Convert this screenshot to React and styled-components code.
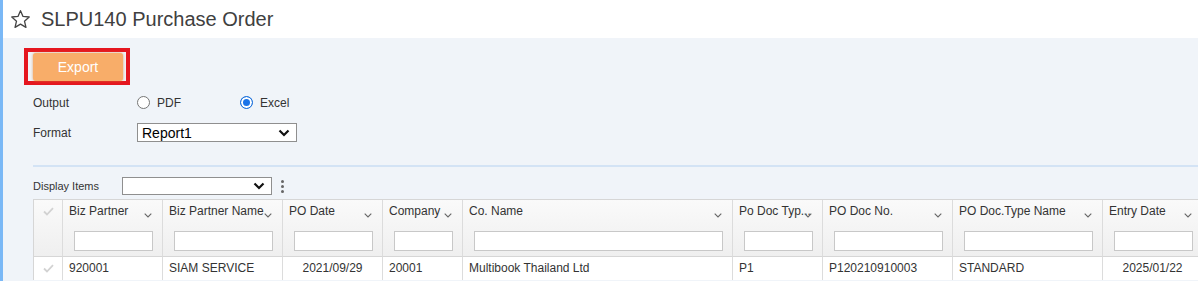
import React from "react";
import styled, { createGlobalStyle } from "styled-components";

const GlobalStyle = createGlobalStyle`
  html, body {
    margin: 0;
    padding: 0;
    background: #fff;
    overflow: hidden;
  }
  body {
    font-family: "Liberation Sans", Arial, sans-serif;
    color: #333;
  }
`;

const Page = styled.div`
  display: flex;
  width: 1198px;
  height: 281px;
  overflow: hidden;
`;

const Stripe = styled.div`
  width: 3px;
  flex-shrink: 0;
  background: #7ab8f6;
`;

const Main = styled.div`
  flex: 1;
  min-width: 0;
  display: flex;
  flex-direction: column;
`;

const TitleBar = styled.div`
  height: 38px;
  flex-shrink: 0;
  display: flex;
  align-items: center;
  gap: 10px;
  padding-left: 7px;
  background: #fff;
`;

const Title = styled.h1`
  margin: 0;
  font-size: 20px;
  font-weight: 400;
  color: #404040;
  line-height: 24px;
`;

const Content = styled.div`
  flex: 1;
  background: #f0f4f9;
  padding: 10px 0 0 30px;
  overflow: hidden;
`;

const Highlight = styled.div`
  display: inline-flex;
  margin-left: -9px;
  border: 4px solid #e5161f;
  padding: 1px 3px 0 5px;
`;

const ExportButton = styled.button`
  width: 90px;
  height: 28px;
  border: none;
  border-radius: 3px;
  background: #f8ad69;
  color: #fff;
  font-family: inherit;
  font-size: 14px;
  box-shadow: 0 0 3px rgba(214, 130, 60, 0.7);
  cursor: pointer;
`;

const FormRow = styled.div`
  display: flex;
  align-items: center;
  height: ${({ $h }) => $h}px;
  margin-top: ${({ $mt }) => $mt}px;
`;

const Label = styled.span`
  width: ${({ $w }) => $w}px;
  flex-shrink: 0;
  font-size: ${({ $size }) => $size || 12}px;
  color: #333;
`;

const RadioOption = styled.label`
  width: 103px;
  display: flex;
  align-items: center;
  gap: 7px;
  font-size: 12px;
  color: #333;
`;

const RadioDot = styled.span`
  width: 13px;
  height: 13px;
  box-sizing: border-box;
  border-radius: 50%;
  border: 1px solid ${({ $checked }) => ($checked ? "#1a6fd9" : "#767676")};
  background: ${({ $checked }) => ($checked ? "#1a73e8" : "#fff")};
  box-shadow: ${({ $checked }) => ($checked ? "inset 0 0 0 2px #fff" : "none")};
`;

const Select = styled.div`
  width: ${({ $w }) => $w}px;
  height: ${({ $h }) => $h}px;
  box-sizing: border-box;
  border: 1px solid #8f8f8f;
  background: #fff;
  display: flex;
  align-items: center;
  justify-content: space-between;
  padding: 0 6px 0 4px;
  font-size: 14px;
  color: #000;
`;

const Separator = styled.div`
  height: 2px;
  margin-top: 23px;
  background: #d3e3f5;
`;

const Kebab = styled.div`
  margin-left: 9px;
  display: flex;
  flex-direction: column;
  gap: 2px;

  span {
    width: 3px;
    height: 3px;
    border-radius: 50%;
    background: #666;
  }
`;

const Grid = styled.div`
  margin-top: 4px;
  border-top: 1px solid #d6d6d6;
  border-left: 1px solid #d6d6d6;
  width: 1200px;
`;

const Row = styled.div`
  display: flex;
`;

const HeadCell = styled.div`
  position: relative;
  width: ${({ $w }) => $w}px;
  height: 57px;
  flex-shrink: 0;
  box-sizing: border-box;
  padding: 4px 0 0 6px;
  border-right: 1px solid #dcdcdc;
  border-bottom: 1px solid #d6d6d6;
  background: linear-gradient(#fafafa, #efefef);
`;

const HeadLabel = styled.div`
  font-size: 12px;
  line-height: 14px;
  color: #333;
  white-space: nowrap;
  overflow: hidden;
  text-overflow: ellipsis;
  padding-right: 4px;
`;

const SortChevron = styled.svg`
  position: absolute;
  right: 10px;
  top: 13px;
`;

const FilterInput = styled.div`
  width: ${({ $w }) => $w - 21}px;
  height: 20px;
  box-sizing: border-box;
  margin: 13px 0 0 5px;
  border: 1px solid #c8c8c8;
  background: #fff;
`;

const CheckCell = styled.div`
  width: 29px;
  height: ${({ $h }) => $h}px;
  flex-shrink: 0;
  box-sizing: border-box;
  border-right: 1px solid #dcdcdc;
  border-bottom: ${({ $head }) => ($head ? "1px solid #d6d6d6" : "none")};
  background: ${({ $head }) => ($head ? "linear-gradient(#fafafa, #efefef)" : "#fff")};
  display: flex;
  justify-content: center;
  align-items: flex-start;
  padding-top: 7px;
`;

const DataCell = styled.div`
  width: ${({ $w }) => $w}px;
  height: 23px;
  flex-shrink: 0;
  box-sizing: border-box;
  padding: 0 6px;
  border-right: 1px solid #dcdcdc;
  background: #fff;
  font-size: 12px;
  line-height: 23px;
  color: #333;
  white-space: nowrap;
  overflow: hidden;
  text-align: ${({ $align }) => $align || "left"};
`;

const columns = [
  { key: "bp", label: "Biz Partner", w: 100, value: "920001" },
  { key: "bpn", label: "Biz Partner Name", w: 120, value: "SIAM SERVICE" },
  { key: "pod", label: "PO Date", w: 100, value: "2021/09/29", align: "center" },
  { key: "co", label: "Company", w: 80, value: "20001" },
  { key: "con", label: "Co. Name", w: 270, value: "Multibook Thailand Ltd" },
  { key: "pdt", label: "Po Doc Typ...", w: 90, value: "P1" },
  { key: "pdn", label: "PO Doc No.", w: 130, value: "P120210910003" },
  { key: "pdtn", label: "PO Doc.Type Name", w: 150, value: "STANDARD" },
  { key: "ed", label: "Entry Date", w: 100, value: "2025/01/22", align: "center" },
];

const StarIcon = () => (
  <svg width="21" height="21" viewBox="0 0 20 20">
    <path
      d="M10 1.6 L12.4 7.1 L18.3 7.6 L13.8 11.6 L15.2 17.5 L10 14.4 L4.8 17.5 L6.2 11.6 L1.7 7.6 L7.6 7.1 Z"
      fill="none"
      stroke="#444"
      strokeWidth="1.25"
      strokeLinejoin="round"
    />
  </svg>
);

const BoldChevron = () => (
  <svg width="12" height="8" viewBox="0 0 12 8">
    <path d="M1.5 1.5 L6 6 L10.5 1.5" fill="none" stroke="#111" strokeWidth="2.2" />
  </svg>
);

const ThinChevron = () => (
  <SortChevron width="8" height="5" viewBox="0 0 8 5">
    <path d="M0.7 0.7 L4 4 L7.3 0.7" fill="none" stroke="#666" strokeWidth="1.1" />
  </SortChevron>
);

const FadedCheck = () => (
  <svg width="11" height="9" viewBox="0 0 11 9">
    <path d="M1 4.5 L4 7.5 L10 1.2" fill="none" stroke="#d2d2d2" strokeWidth="1.8" />
  </svg>
);

export default function App() {
  return (
    <>
      <GlobalStyle />
      <Page>
        <Stripe />
        <Main>
          <TitleBar>
            <StarIcon />
            <Title>SLPU140 Purchase Order</Title>
          </TitleBar>
          <Content>
            <Highlight>
              <ExportButton>Export</ExportButton>
            </Highlight>

            <FormRow $h={21} $mt={7}>
              <Label $w={104}>Output</Label>
              <RadioOption>
                <RadioDot />
                PDF
              </RadioOption>
              <RadioOption>
                <RadioDot $checked />
                Excel
              </RadioOption>
            </FormRow>

            <FormRow $h={19} $mt={10}>
              <Label $w={104}>Format</Label>
              <Select $w={160} $h={19}>
                Report1
                <BoldChevron />
              </Select>
            </FormRow>

            <Separator />

            <FormRow $h={18} $mt={10}>
              <Label $w={89} $size={11}>
                Display Items
              </Label>
              <Select $w={150} $h={18}>
                <span />
                <BoldChevron />
              </Select>
              <Kebab>
                <span />
                <span />
                <span />
              </Kebab>
            </FormRow>

            <Grid>
              <Row>
                <CheckCell $head $h={57}>
                  <FadedCheck />
                </CheckCell>
                {columns.map((c) => (
                  <HeadCell key={c.key} $w={c.w}>
                    <HeadLabel>{c.label}</HeadLabel>
                    <ThinChevron />
                    <FilterInput $w={c.w} />
                  </HeadCell>
                ))}
              </Row>
              <Row>
                <CheckCell $h={23}>
                  <FadedCheck />
                </CheckCell>
                {columns.map((c) => (
                  <DataCell key={c.key} $w={c.w} $align={c.align}>
                    {c.value}
                  </DataCell>
                ))}
              </Row>
            </Grid>
          </Content>
        </Main>
      </Page>
    </>
  );
}
